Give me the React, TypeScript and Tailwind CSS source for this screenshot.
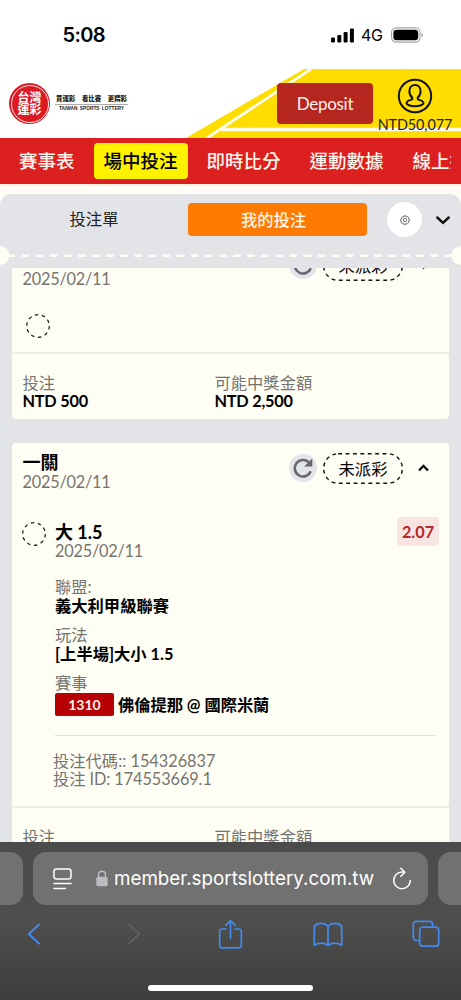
import type { ReactNode } from "react";

const NAV_ITEMS = ["賽事表", "場中投注", "即時比分", "運動數據", "線上投注"];

function StatusBar() {
  return (
    <div className="flex h-[69px] shrink-0 items-start justify-between bg-white pt-[23px] pr-[37px] pl-[62.5px] font-['Inter',sans-serif] text-black">
      <span className="text-[20px] leading-6 font-semibold tracking-[-0.6px]">5:08</span>
      <div className="flex h-6 items-center">
        <svg width="23" height="15" viewBox="0 0 23 15">
          <rect x="0" y="9.5" width="4" height="5" rx="1.2" />
          <rect x="6.3" y="7" width="4" height="7.5" rx="1.2" />
          <rect x="12.6" y="4" width="4" height="10.5" rx="1.2" />
          <rect x="18.9" y="0.5" width="4" height="14" rx="1.2" />
        </svg>
        <span className="ml-[7px] w-[23px] text-[16px] leading-6 tracking-[-0.3px]">4G</span>
        <svg className="ml-[7px]" width="33" height="16" viewBox="0 0 33 16">
          <rect x="0.6" y="0.9" width="28.4" height="14.2" rx="4.6" fill="none" stroke="#a3a3a3" strokeWidth="1.1" />
          <rect x="2.4" y="2.7" width="24.8" height="10.6" rx="3.2" />
          <path d="M30.4 6v4.2c.9-.3 1.5-1.1 1.5-2.1s-.6-1.8-1.5-2.1z" fill="#a3a3a3" />
        </svg>
      </div>
    </div>
  );
}

function Logo() {
  return (
    <div className="relative flex items-center">
      <div className="flex size-[41px] items-center justify-center rounded-full bg-[#dd1a21]">
        <div className="flex size-[38px] flex-col items-center justify-center rounded-full border border-white/90 text-[12px] leading-[12px] font-bold text-white">
          <span>台灣</span>
          <span>運彩</span>
        </div>
      </div>
      <div className="ml-[5px] flex w-[73px] flex-col items-center text-[#222]">
        <div className="flex w-full justify-between px-px text-[6.4px] leading-[9px] font-black whitespace-nowrap">
          <span>買運彩</span>
          <span>看比賽</span>
          <span>更精彩</span>
        </div>
        <div className="mt-[1px] h-px w-full bg-[#aaa]" />
        <div className="font-['Liberation_Sans',sans-serif] text-[4.8px] leading-[8px] font-bold whitespace-nowrap [word-spacing:1px]">
          TAIWAN SPORTS LOTTERY
        </div>
      </div>
    </div>
  );
}

function Header() {
  return (
    <header className="relative flex h-[69px] shrink-0 items-center justify-between overflow-hidden bg-white pl-[9px]">
      <svg className="absolute top-0 right-0" width="275" height="69" viewBox="186 69 275 69">
        <path d="M186 138 304 69H461V138Z" fill="#ffdd00" />
        <path d="M207 138 311 69" stroke="#fffdea" strokeWidth="2.8" />
        <path d="M221 129.5H461" stroke="#fffdea" strokeWidth="3.6" />
      </svg>
      <Logo />
      <div className="relative flex items-start pt-[5px]">
        <button className="mt-[5px] h-[41px] w-[96px] rounded bg-[#b5261e] text-[17px] tracking-[-0.3px] text-[#fff3ec]">
          Deposit
        </button>
        <div className="flex w-[88px] flex-col items-center pr-[4px]">
          <svg width="36" height="36" viewBox="0 0 36 36" fill="none" stroke="#111" strokeWidth="2">
            <circle cx="18" cy="18" r="16.2" />
            <path d="M15.2 19.6C13.2 18 12.4 15.6 12.4 13.2c0-3.8 2.3-6.2 5.6-6.2s5.6 2.4 5.6 6.2c0 2.4-.8 4.8-2.8 6.4-.5 1.3.1 1.9 1.4 2.3 2.7.7 4.3 1.4 4.3 3.4 0 1.3-3.6 3-8.5 3s-8.5-1.7-8.5-3c0-2 1.6-2.7 4.3-3.4 1.3-.4 1.9-1 1.4-2.3z" />
          </svg>
          <span className="mt-[2px] text-[14.4px] leading-[18px] tracking-[-0.1px] text-[#222]">NTD50,077</span>
        </div>
      </div>
    </header>
  );
}

function NavBar() {
  return (
    <nav className="flex h-[46px] shrink-0 items-center overflow-hidden bg-[#dc1f1f] pr-[10px] pl-[9px]">
      <div className="flex overflow-hidden">
        {NAV_ITEMS.map((item) => (
          <a
            key={item}
            className={
              item === "場中投注"
                ? "mr-[9px] shrink-0 rounded bg-[#fff200] px-[10px] text-[18.5px] leading-[36px] font-medium text-black"
                : "mr-[9px] shrink-0 px-[10px] text-[18.5px] leading-[36px] font-medium text-[#fff5ec]"
            }
          >
            {item}
          </a>
        ))}
      </div>
    </nav>
  );
}

function SlipTabs() {
  return (
    <div className="relative h-[74px] shrink-0 rounded-t-[11px] bg-[#e3e4e7]">
      <div className="flex h-[51px] items-center pr-[11px]">
        <span className="w-[188px] text-center text-[16.3px] text-[#222]">投注單</span>
        <span className="h-[33px] w-[179px] rounded bg-[#ff7a00] pr-[8px] text-center text-[16.3px] leading-[33px] font-medium text-[#fff5e6]">
          我的投注
        </span>
        <span className="ml-[20px] flex size-[35px] items-center justify-center rounded-full bg-white">
          <svg width="10" height="10" viewBox="0 0 24 24" fill="none" stroke="#555" strokeWidth="2">
            <circle cx="12" cy="12" r="4" />
            <path d="M9.5 2h5l.8 3 2.7-1.3 3.1 3.2-1.5 2.6 2.9.9v4l-2.9.8 1.4 2.7-3.2 3.2-2.7-1.3-.6 2.7h-5l-.8-2.7-2.7 1.3L2 17.9l1.4-2.7-1.9-.8v-4l2.9-.9L3 6.9l3.2-3.2L8.9 5z" />
          </svg>
        </span>
        <svg className="ml-[14px]" width="14" height="10" viewBox="0 0 14 10" fill="none" stroke="#111" strokeWidth="2.4">
          <path d="M1.3 2.5 7 7.8 12.7 2.5" strokeLinecap="round" />
        </svg>
      </div>
      {/* ticket perforation */}
      <svg className="absolute top-[52px] left-0" width="461" height="20" viewBox="0 0 461 20">
        <path d="M9 9.7H452" stroke="#fffef5" strokeWidth="2.4" strokeDasharray="5.6 8.5" strokeDashoffset="0.5" strokeLinecap="round" />
        <circle cx="0" cy="9.5" r="9.5" fill="#fffef5" />
        <circle cx="461" cy="9.5" r="9.5" fill="#fffef5" />
      </svg>
    </div>
  );
}

function DashedCircle() {
  return (
    <svg className="shrink-0" width="24" height="24" viewBox="0 0 24 24" fill="none" stroke="#222" strokeWidth="1.3">
      <circle cx="12" cy="12" r="11.3" strokeDasharray="3.5 3.6" />
    </svg>
  );
}

function CardHeader({ open = true }: { open?: boolean }) {
  return (
    <div className="flex h-[70px] items-start justify-between pt-[10px] pr-[20px] pl-[10.5px]">
      <div>
        <div className="text-[18px] leading-[19px] font-bold text-black">一關</div>
        <div className="text-[16.3px] leading-[20px] tracking-[-0.22px] text-[#77746f]">2025/02/11</div>
      </div>
      <div className="flex items-center">
        <span className="-mt-[2px] flex size-[28px] items-center justify-center rounded-full bg-[#e3e4e8]">
          <svg width="20" height="20" viewBox="0 0 20 20" fill="none" stroke="#66666e" strokeWidth="2.5">
            <path d="M17.8 13.2A8.3 8.3 0 1 1 15.6 4" />
            <path d="M19.3 0.5V8.6H11.2z" fill="#66666e" stroke="none" />
          </svg>
        </span>
        <span className="relative ml-[6px] h-[31px] w-[80px] text-center text-[16.3px] leading-[31px] text-black">
          <svg className="absolute inset-0" width="80" height="31" fill="none" stroke="#111" strokeWidth="1.4">
            <rect x="0.7" y="0.7" width="78.6" height="29.6" rx="14.5" strokeDasharray="3.8 3.6" />
          </svg>
          未派彩
        </span>
        <svg className="-mt-[2px] ml-[15px]" width="11" height="8" viewBox="0 0 11 8" fill="none" stroke="#111" strokeWidth="2.3">
          <path d={open ? "M1 6.5 5.5 2 10 6.5" : "M1 2 5.5 6.5 10 2"} />
        </svg>
      </div>
    </div>
  );
}

function CardFooter({ amount, payout }: { amount: string; payout: string }) {
  return (
    <div className="flex h-[68px] border-t-2 border-[#eeede8] pt-[20px] pl-[10.5px] text-[16.3px] leading-[18px]">
      <div className="w-[192px]">
        <div className="text-[#77746f]">投注</div>
        <div className="font-bold tracking-[-0.22px] text-black">{amount}</div>
      </div>
      <div>
        <div className="text-[#77746f]">可能中獎金額</div>
        <div className="font-bold tracking-[-0.22px] text-black">{payout}</div>
      </div>
    </div>
  );
}

function Detail({ label, children }: { label: string; children: ReactNode }) {
  return (
    <div className="mb-[9px]">
      <div className="leading-[19px] text-[#77746f]">{label}</div>
      <div className="leading-[20px] font-bold text-black">{children}</div>
    </div>
  );
}

function BetList() {
  return (
    <main className="h-[574px] shrink-0 overflow-hidden bg-[#e3e4e7] px-[12px]">
      <section className="-mt-[28px] h-[179px] rounded bg-[#fffef5]">
        <CardHeader open={false} />
        <div className="h-[42px] pt-[4px] pl-[14px]">
          <DashedCircle />
        </div>
        <CardFooter amount="NTD 500" payout="NTD 2,500" />
      </section>

      <section className="mt-[24px] rounded bg-[#fffef5]">
        <CardHeader />
        <div className="flex h-[293px] pt-[9px] pl-[10px] text-[16.3px]">
          <DashedCircle />
          <div className="ml-[9px] flex-1">
            <div className="flex h-[55px] justify-between pr-[10px]">
              <div>
                <div className="text-[18px] leading-[20px] font-bold text-black">大 1.5</div>
                <div className="leading-[18px] tracking-[-0.22px] text-[#77746f]">2025/02/11</div>
              </div>
              <span className="-mt-[5px] h-[29px] w-[42px] rounded bg-[#f8e4e0] text-center leading-[29px] font-bold text-[#b5282b]">
                2.07
              </span>
            </div>
            <Detail label="聯盟:">義大利甲級聯賽</Detail>
            <Detail label="玩法">[上半場]大小 1.5</Detail>
            <div className="leading-[19px] text-[#77746f]">賽事</div>
            <div className="mt-px flex items-center font-bold text-black">
              <span className="mr-[4px] h-[23px] w-[59px] rounded-[2px] bg-[#b60004] text-center text-[14px] leading-[23px] text-[#fff3ec]">
                1310
              </span>
              <span className="leading-[23px] tracking-[-0.05px]">佛倫提那 @ 國際米蘭</span>
            </div>
            <div className="mt-[19px] mr-[13px] h-px bg-[#e2e1dc]" />
            <div className="mt-[16px] -ml-[2px] leading-[18px] text-[#77746f]">
              <div>投注代碼:: 154326837</div>
              <div className="tracking-[-0.08px]">投注 ID: 174553669.1</div>
            </div>
          </div>
        </div>
        <CardFooter amount="NTD 500" payout="NTD 1,035" />
      </section>
    </main>
  );
}

function BrowserBar() {
  return (
    <footer className="flex h-[158px] shrink-0 flex-col overflow-hidden bg-linear-to-b from-[#4b4b4b] via-[#4e4e4d] to-[#3e3e3d]">
      <div className="mt-[10px] flex h-[53px] justify-between">
        <div className="w-[23px] rounded-r-[13px] bg-[#717171]" />
        <div className="flex w-[395px] items-center rounded-[13px] bg-[#717171] pr-[16px] pl-[20px]">
          <svg width="19" height="22" viewBox="0 0 19 22" fill="none" stroke="#fff" strokeWidth="1.5" strokeLinecap="round">
            <rect x="1" y="1" width="17" height="10" rx="2.5" />
            <path d="M1 15.6H18M1 20.5H12.5" />
          </svg>
          <svg className="ml-[24px]" width="12" height="17" viewBox="0 0 12 17">
            <rect x="0.3" y="6.8" width="11.4" height="9.5" rx="1.8" fill="#bcbbc2" />
            <path d="M2.6 7V4.6a3.4 3.4 0 0 1 6.8 0V7" fill="none" stroke="#bcbbc2" strokeWidth="1.4" />
          </svg>
          <span className="ml-[6px] w-[262px] pt-[2px] font-['Inter',sans-serif] text-[18.8px] whitespace-nowrap text-white">
            member.sportslottery.com.tw
          </span>
          <svg className="ml-auto" width="20" height="23" viewBox="0 0 20 23" fill="none" stroke="#fff" strokeWidth="1.5" strokeLinecap="round" strokeLinejoin="round">
            <path d="M11.5 5.1H10A8.3 8.3 0 1 0 18.3 13.4" />
            <path d="M8.8 1.3 12.8 5.2 8.8 9.2" />
          </svg>
        </div>
        <div className="w-[23px] rounded-l-[13px] bg-[#717171]" />
      </div>
      <div className="mt-[13px] -ml-[15px] grid h-[32px] w-[490px] grid-cols-5 place-items-center text-[#4389f0]">
        <svg width="14" height="22" viewBox="0 0 14 22" fill="none" stroke="currentColor" strokeWidth="2" strokeLinecap="round" strokeLinejoin="round">
          <path d="M12 1.5 1.8 11 12 20.5" />
        </svg>
        <svg className="ml-[4px] text-[#646464]" width="14" height="22" viewBox="0 0 14 22" fill="none" stroke="currentColor" strokeWidth="1.6" strokeLinecap="round" strokeLinejoin="round">
          <path d="M2 1.5 12.2 11 2 20.5" />
        </svg>
        <svg width="25" height="31" viewBox="0 0 24 31" fill="none" stroke="currentColor" strokeWidth="1.7" strokeLinecap="round" strokeLinejoin="round">
          <path d="M7.5 10H3.5A2.3 2.3 0 0 0 1.2 12.3V26.5A2.3 2.3 0 0 0 3.5 28.8H20.5A2.3 2.3 0 0 0 22.8 26.5V12.3A2.3 2.3 0 0 0 20.5 10H16.5" />
          <path d="M12 19.5V2M7.3 6.3 12 1.6 16.7 6.3" />
        </svg>
        <svg width="30" height="25" viewBox="0 0 30 25" fill="none" stroke="currentColor" strokeWidth="1.7" strokeLinecap="round" strokeLinejoin="round">
          <path d="M15 4.6C13.5 2.3 11 1.3 8 1.3S2.8 2.2 1.3 4.2V23.6C3 21.9 5.2 21.1 8 21.1s5.3.8 7 2.5c1.7-1.7 4.2-2.5 7-2.5s5 .8 6.7 2.5V4.2C27.2 2.2 25 1.3 22 1.3S16.5 2.3 15 4.6ZM15 4.6V23" />
        </svg>
        <svg width="28" height="28" viewBox="0 0 28 28" fill="none" stroke="currentColor" strokeWidth="1.7">
          <path d="M7.5 20.5H4.5A3 3 0 0 1 1.3 17.5V4.3A3 3 0 0 1 4.3 1.3H17.5A3 3 0 0 1 20.5 4.3V7" />
          <rect x="7.7" y="7.2" width="19" height="19" rx="3" />
        </svg>
      </div>
      <div className="mt-[35px] h-[6px] w-[165px] shrink-0 self-center rounded-full bg-white" />
    </footer>
  );
}

export default function App() {
  return (
    <div
      lang="zh-Hant"
      className="flex h-[1000px] w-[461px] flex-col overflow-hidden bg-[#fffdf5] font-['Lato','Noto_Sans_CJK_TC',sans-serif]"
    >
      <StatusBar />
      <Header />
      <NavBar />
      <div className="h-[10px] shrink-0 border-t-2 border-[#fff0e4] bg-[#fffdf5]" />
      <SlipTabs />
      <BetList />
      <BrowserBar />
    </div>
  );
}
